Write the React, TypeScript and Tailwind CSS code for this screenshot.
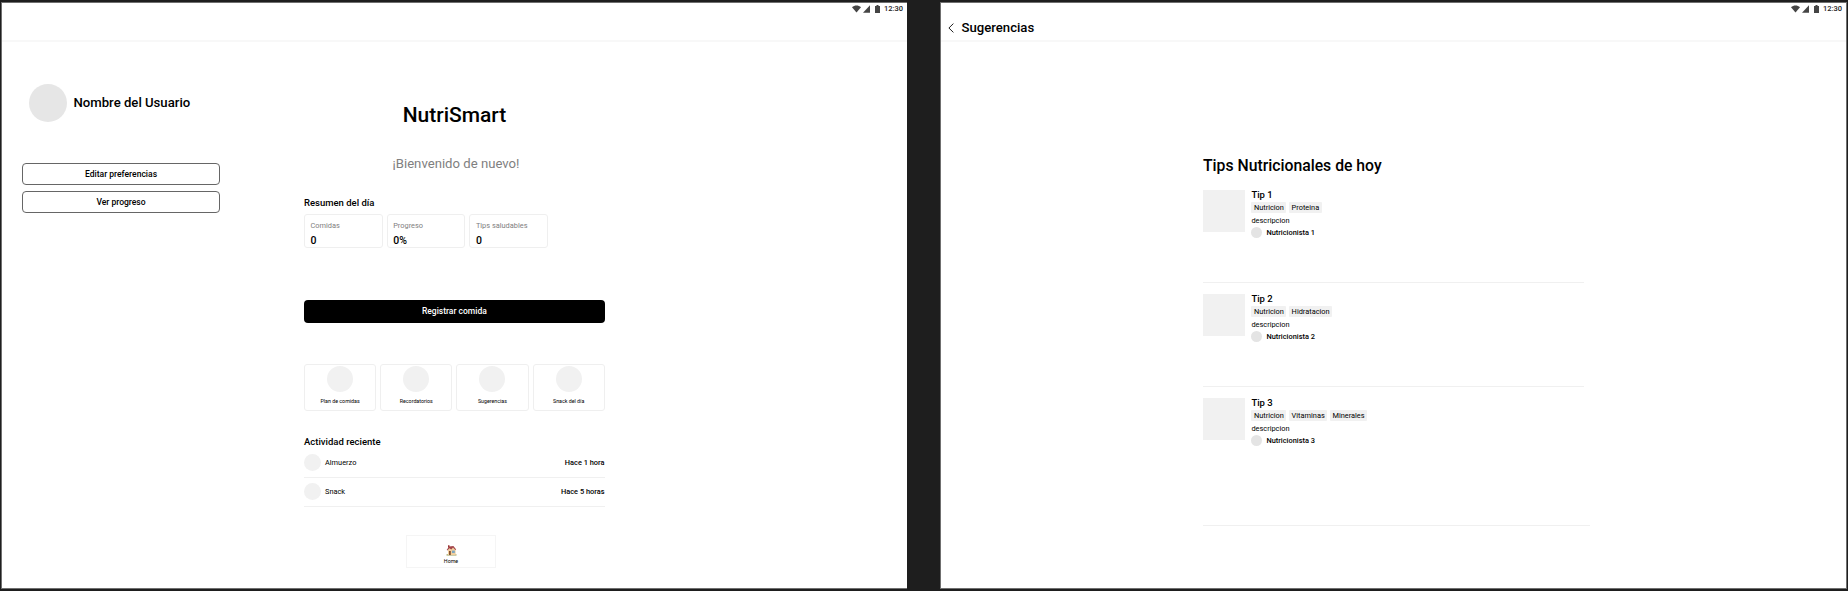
import React from 'react';

function StatusBar() {
  return (
    <div className="flex h-[12px] items-center justify-end pr-[4px] text-[#454545]">
      <svg width="9" height="8" viewBox="0 0 9 8" className="mr-[2px]">
        <path d="M0 2.2C2.5 0 6.5 0 9 2.2L4.5 7.6Z" fill="currentColor" />
      </svg>
      <svg width="7" height="8" viewBox="0 0 7 8" className="mr-[4.5px]">
        <path d="M7 .2V7.8H0Z" fill="currentColor" />
      </svg>
      <svg width="5" height="8" viewBox="0 0 5 8" className="mr-[4px]">
        <path d="M0 1H1.5V0H3.5V1H5V8H0Z" fill="currentColor" />
      </svg>
      <span className="text-[7.5px] leading-[10px] font-medium text-[#222]">12:30</span>
    </div>
  );
}

function Frame({ title, edge, children }: { title?: string; edge: string; children: React.ReactNode }) {
  return (
    <section className={`flex h-[587px] flex-none flex-col overflow-hidden border-[#6f6f6f] bg-white ${edge}`}>
      <header className="h-[39px] flex-none border-b-2 border-[#f8f8f8]">
        <StatusBar />
        {title && (
          <div className="flex h-[25px] items-center pl-[7px]">
            <svg width="6" height="10" viewBox="0 0 6 10" className="mr-[7.5px]">
              <path d="M5.4 .6L.9 5L5.4 9.4" fill="none" stroke="#222" strokeWidth="1" />
            </svg>
            <h1 className="text-[13.15px] font-medium">{title}</h1>
          </div>
        )}
      </header>
      {children}
    </section>
  );
}

const outline =
  'h-[22px] w-[198px] rounded-[4px] border border-[#666] text-[8.55px] leading-[19px] font-medium';

const summary = [
  { label: 'Comidas', value: '0' },
  { label: 'Progreso', value: '0%' },
  { label: 'Tips saludables', value: '0' },
];
const shortcuts = ['Plan de comidas', 'Recordatorios', 'Sugerencias', 'Snack del día'];
const activity = [
  { name: 'Almuerzo', time: 'Hace 1 hora' },
  { name: 'Snack', time: 'Hace 5 horas' },
];

function House() {
  return (
    <svg width="11" height="11" viewBox="0 0 11 11">
      <path d="M.5 9.2H10.5V10.6H.5Z" fill="#a8ad74" />
      <path d="M2 4.5L4 2.4L7.5 2L9.6 4.6V10H2Z" fill="#f0cf9e" />
      <path d="M.7 5L3 1.4L7.4 1.1L10.2 4.6L9.4 5L7 2.6L5.3 4.6L3.4 3.2L1.4 5.4Z" fill="#a3444a" />
      <path d="M2 .3H3.5V2.5H2Z" fill="#9a3433" />
      <path d="M3 6H4.8V10H3Z" fill="#84502f" />
      <path d="M6 5.6H8.8V8H6Z" fill="#7ba6c0" />
    </svg>
  );
}

function HomeScreen() {
  return (
    <Frame edge="w-[906px] border-y border-l">
      <div className="flex">
        <aside className="w-[302px] flex-none pl-[20px] pt-[42px]">
          <div className="flex items-center pl-[7px]">
            <div className="mr-[6.5px] size-[38px] rounded-full bg-[#e6e6e6]" />
            <h2 className="text-[13.15px] font-medium">Nombre del Usuario</h2>
          </div>
          <div className="mt-[41px] flex flex-col gap-[6px]">
            <button className={outline}>Editar preferencias</button>
            <button className={outline}>Ver progreso</button>
          </div>
        </aside>
        <main className="w-[301px] pt-[59px]">
          <h1 className="h-[28px] text-center text-[21px] leading-[28px] font-medium">NutriSmart</h1>
          <p className="mt-[25px] h-[20px] pl-[3px] text-center text-[13.15px] leading-[20px] text-[#808080]">¡Bienvenido de nuevo!</p>
          <h3 className="mt-[22px] h-[14px] text-[9.5px] leading-[14px] font-medium">Resumen del día</h3>
          <div className="mt-[4px] flex gap-[4px]">
            {summary.map((s) => (
              <div key={s.label} className="h-[33.5px] w-[78.7px] rounded-[3px] border border-[#efefef] pl-[5.5px] pt-[6px]">
                <div className="h-[10px] text-[7.4px] leading-[10px] text-[#808080]">{s.label}</div>
                <div className="mt-[3px] h-[14px] text-[10.5px] leading-[14px] font-medium">{s.value}</div>
              </div>
            ))}
          </div>
          <button className="mt-[52.5px] block h-[22.7px] w-[300.7px] rounded-[4px] bg-black text-[8.5px] leading-[21px] font-medium text-white">Registrar comida</button>
          <div className="mt-[41.3px] flex gap-[4px]">
            {shortcuts.map((s) => (
              <div key={s} className="flex h-[47px] w-[72.2px] flex-col items-center rounded-[3px] border border-[#efefef] pt-[1px]">
                <div className="size-[26px] rounded-full bg-[#f1f1f1]" />
                <div className="mt-[5px] text-[5.3px] leading-[8px]">{s}</div>
              </div>
            ))}
          </div>
          <h3 className="mt-[24px] h-[14px] text-[9.5px] leading-[14px] font-medium">Actividad reciente</h3>
          {activity.map((a) => (
            <div key={a.name} className="flex h-[29px] items-center border-b border-[#f0f0f0] text-[7.4px]">
              <div className="mr-[4px] size-[17px] rounded-full bg-[#f1f1f1]" />
              <span className="flex-1">{a.name}</span>
              <span className="pr-[.5px] font-medium">{a.time}</span>
            </div>
          ))}
          <div className="ml-[102px] mt-[28px] flex h-[33px] w-[90px] flex-col items-center border border-[#f5f5f5] pt-[9px]">
            <House />
            <span className="mt-[1px] text-[5.3px] leading-[8px]">Home</span>
          </div>
        </main>
      </div>
    </Frame>
  );
}

const tips = [
  { n: 1, tags: ['Nutricion', 'Proteina'], box: 'h-[93px] w-[381px]' },
  { n: 2, tags: ['Nutricion', 'Hidratacion'], box: 'h-[93px] w-[381px] mt-[11px]' },
  { n: 3, tags: ['Nutricion', 'Vitaminas', 'Minerales'], box: 'h-[128px] w-[387px] mt-[11px]' },
];

function TipsScreen() {
  return (
    <Frame title="Sugerencias" edge="w-[907px] border">
      <main className="pl-[262px] pt-[112px]">
        <h2 className="h-[24px] text-[15.75px] leading-[24px] font-medium">Tips Nutricionales de hoy</h2>
        <div className="mt-[12px]">
          {tips.map((t) => (
            <article key={t.n} className={`flex border-b border-[#f0f0f0] ${t.box}`}>
              <div className="mr-[6.4px] size-[42px] flex-none bg-[#f1f1f1]" />
              <div>
                <h3 className="h-[12px] text-[9.5px] leading-[10px] font-medium">Tip {t.n}</h3>
                <div className="flex gap-[2.7px]">
                  {t.tags.map((g) => (
                    <span key={g} className="h-[11px] rounded-[1px] bg-[#f1f1f1] px-[2.5px] text-[7.4px] leading-[11px]">{g}</span>
                  ))}
                </div>
                <p className="mt-[2px] h-[12px] text-[7.4px] leading-[11px]">descripcion</p>
                <div className="flex items-center">
                  <div className="mr-[4px] size-[11px] rounded-full bg-[#e4e4e4]" />
                  <span className="text-[7.4px] leading-[11px] font-medium">Nutricionista {t.n}</span>
                </div>
              </div>
            </article>
          ))}
        </div>
      </main>
    </Frame>
  );
}

export default function App() {
  return (
    <div className="flex h-[591px] w-[1848px] gap-[33px] overflow-hidden bg-[#1e1e1e] pl-[1px] pt-[2px] font-[Roboto,sans-serif] text-black">
      <HomeScreen />
      <TipsScreen />
    </div>
  );
}
